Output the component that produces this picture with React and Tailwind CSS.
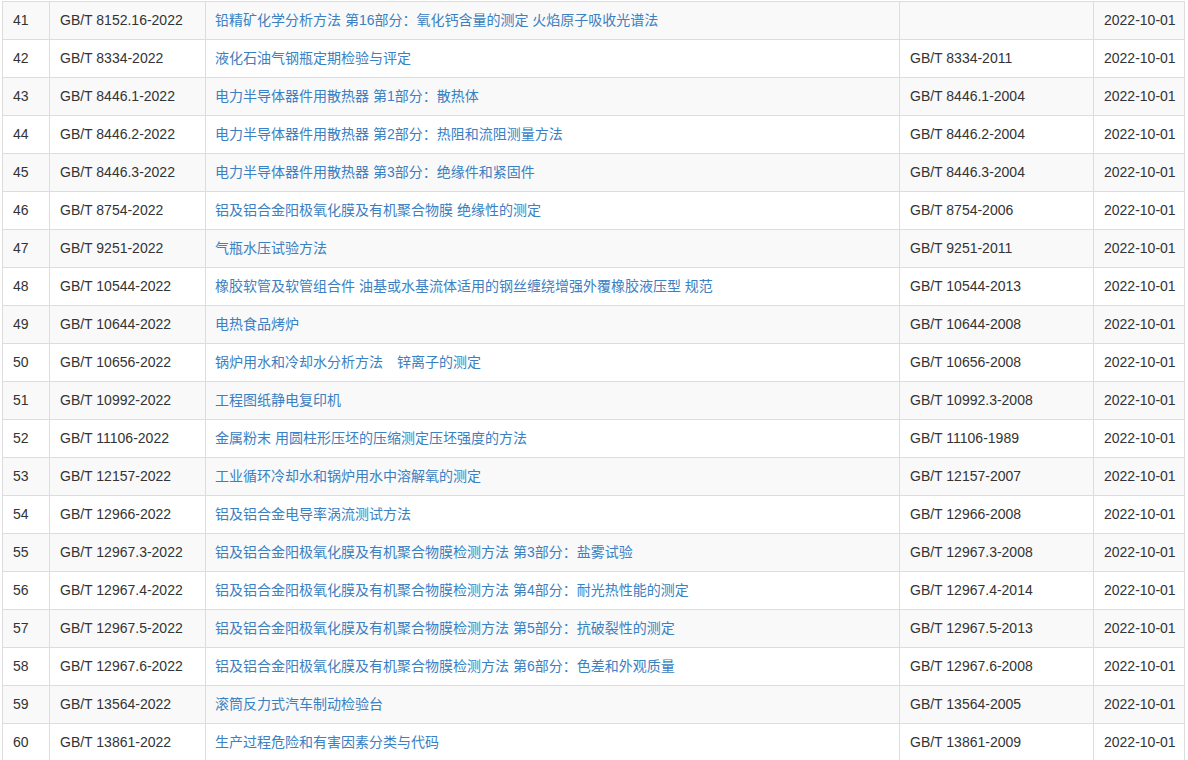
import React from "react";

const rows = [
  ["41", "GB/T 8152.16-2022", "铅精矿化学分析方法 第16部分：氧化钙含量的测定 火焰原子吸收光谱法", ""],
  ["42", "GB/T 8334-2022", "液化石油气钢瓶定期检验与评定", "GB/T 8334-2011"],
  ["43", "GB/T 8446.1-2022", "电力半导体器件用散热器 第1部分：散热体", "GB/T 8446.1-2004"],
  ["44", "GB/T 8446.2-2022", "电力半导体器件用散热器 第2部分：热阻和流阻测量方法", "GB/T 8446.2-2004"],
  ["45", "GB/T 8446.3-2022", "电力半导体器件用散热器 第3部分：绝缘件和紧固件", "GB/T 8446.3-2004"],
  ["46", "GB/T 8754-2022", "铝及铝合金阳极氧化膜及有机聚合物膜 绝缘性的测定", "GB/T 8754-2006"],
  ["47", "GB/T 9251-2022", "气瓶水压试验方法", "GB/T 9251-2011"],
  ["48", "GB/T 10544-2022", "橡胶软管及软管组合件 油基或水基流体适用的钢丝缠绕增强外覆橡胶液压型 规范", "GB/T 10544-2013"],
  ["49", "GB/T 10644-2022", "电热食品烤炉", "GB/T 10644-2008"],
  ["50", "GB/T 10656-2022", "锅炉用水和冷却水分析方法\u3000锌离子的测定", "GB/T 10656-2008"],
  ["51", "GB/T 10992-2022", "工程图纸静电复印机", "GB/T 10992.3-2008"],
  ["52", "GB/T 11106-2022", "金属粉末 用圆柱形压坯的压缩测定压坯强度的方法", "GB/T 11106-1989"],
  ["53", "GB/T 12157-2022", "工业循环冷却水和锅炉用水中溶解氧的测定", "GB/T 12157-2007"],
  ["54", "GB/T 12966-2022", "铝及铝合金电导率涡流测试方法", "GB/T 12966-2008"],
  ["55", "GB/T 12967.3-2022", "铝及铝合金阳极氧化膜及有机聚合物膜检测方法 第3部分：盐雾试验", "GB/T 12967.3-2008"],
  ["56", "GB/T 12967.4-2022", "铝及铝合金阳极氧化膜及有机聚合物膜检测方法 第4部分：耐光热性能的测定", "GB/T 12967.4-2014"],
  ["57", "GB/T 12967.5-2022", "铝及铝合金阳极氧化膜及有机聚合物膜检测方法 第5部分：抗破裂性的测定", "GB/T 12967.5-2013"],
  ["58", "GB/T 12967.6-2022", "铝及铝合金阳极氧化膜及有机聚合物膜检测方法 第6部分：色差和外观质量", "GB/T 12967.6-2008"],
  ["59", "GB/T 13564-2022", "滚筒反力式汽车制动检验台", "GB/T 13564-2005"],
  ["60", "GB/T 13861-2022", "生产过程危险和有害因素分类与代码", "GB/T 13861-2009"],
];

const cell = "border border-[#dddddd] px-[10px] h-[38px] py-0 align-middle whitespace-nowrap";

export default function App() {
  return (
    <div
      className="bg-white h-[760px] overflow-hidden pl-[2px] pt-[1px] text-[14px] text-[#333333]"
      style={{ fontFamily: '"Liberation Sans", Arial, "Noto Sans CJK SC", sans-serif' }}
    >
      <table className="table-fixed border-collapse w-[1182px]">
        <colgroup>
          <col className="w-[47px]" />
          <col className="w-[156px]" />
          <col className="w-[694px]" />
          <col className="w-[194px]" />
          <col className="w-[91px]" />
        </colgroup>
        <tbody>
          {rows.map((r, i) => (
            <tr key={r[0]} className={i % 2 === 0 ? "bg-[#f9f9f9]" : "bg-white"}>
              <td className={cell}>{r[0]}</td>
              <td className={cell}>{r[1]}</td>
              <td className={cell}>
                <a href="#" className="text-[#3a80c2] no-underline -ml-px">
                  {r[2]}
                </a>
              </td>
              <td className={cell}>{r[3]}</td>
              <td className={cell}>2022-10-01</td>
            </tr>
          ))}
        </tbody>
      </table>
    </div>
  );
}
